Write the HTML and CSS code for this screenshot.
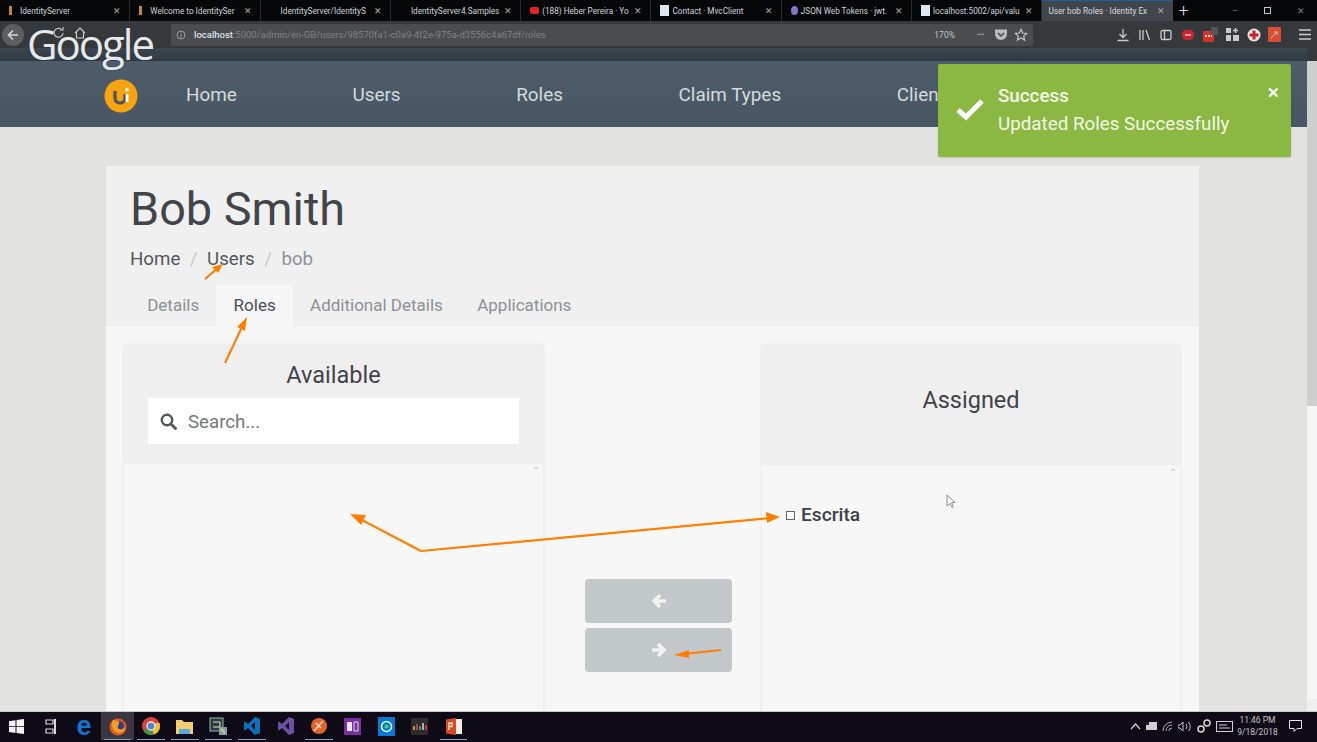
FILE: index.html
```html
<!DOCTYPE html>
<html lang="en">
<head>
<meta charset="utf-8">
<title>User bob Roles</title>
<link rel="stylesheet" href="styles.css">
</head>
<body>
<div class="screen">
  <div class="tabbar">
    <div class="tab"><i class="fav fav-is"></i><span class="tab-t">IdentityServer</span><b class="tab-x">✕</b></div>
    <div class="tab"><i class="fav fav-is"></i><span class="tab-t">Welcome to IdentitySer</span><b class="tab-x">✕</b></div>
    <div class="tab"><i class="fav"></i><span class="tab-t">IdentityServer/IdentityS</span><b class="tab-x">✕</b></div>
    <div class="tab"><i class="fav"></i><span class="tab-t">IdentityServer4.Samples</span><b class="tab-x">✕</b></div>
    <div class="tab tab-ic"><i class="fav fav-yt"></i><span class="tab-t">(188) Heber Pereira · Yo</span><b class="tab-x">✕</b></div>
    <div class="tab tab-ic"><i class="fav fav-doc"></i><span class="tab-t">Contact · MvcClient</span><b class="tab-x">✕</b></div>
    <div class="tab tab-ic"><i class="fav fav-jwt"></i><span class="tab-t">JSON Web Tokens · jwt.</span><b class="tab-x">✕</b></div>
    <div class="tab tab-ic"><i class="fav fav-doc"></i><span class="tab-t">localhost:5002/api/valu</span><b class="tab-x">✕</b></div>
    <div class="tab tab-on"><span class="tab-t">User bob Roles · Identity Ex</span><b class="tab-x">✕</b></div>
    <span class="tab-plus">+</span>
    <div class="winctl"><span>–</span><span class="win-r"></span><span>✕</span></div>
  </div>

  <div class="toolbar">
    <div class="back"><svg width="14" height="14" viewBox="0 0 14 14"><path d="M12 7H3M7 2.500 2.500 7 7 11.500" fill="none" stroke="#d5d8da" stroke-width="1.600"/></svg></div>
    <div class="urlbar">
      <svg class="info" width="10" height="10" viewBox="0 0 10 10"><circle cx="5" cy="5" r="4" fill="none" stroke="#9a9d9f"/><path d="M5 4.400v3M5 2.400v1" stroke="#9a9d9f"/></svg>
      <span class="url"><b>localhost</b>:5000/admin/en-GB/users/98570fa1-c0a9-4f2e-975a-d3556c4a67df/roles</span>
      <span class="zoomlvl">170%</span>
      <span class="dots">•••</span>
      <svg width="14" height="13" viewBox="0 0 14 13"><path d="M1 1.500h12v4.500a6 6 0 0 1-12 0z" fill="#b9bcbe"/><path d="M4 5l3 3 3-3" fill="none" stroke="#45494c" stroke-width="1.500"/></svg>
      <svg width="14" height="14" viewBox="0 0 14 14"><path d="M7 1.300 8.700 5l4 .4-3 2.700.9 4L7 10l-3.600 2.100.9-4-3-2.700 4-.4z" fill="none" stroke="#c4c7c9" stroke-width="1.200"/></svg>
    </div>
    <div class="tools">
      <svg width="14" height="14" viewBox="0 0 14 14"><path d="M7 1v8M3.500 6 7 9.500 10.500 6M1.500 12.500h11" fill="none" stroke="#c9cccd" stroke-width="1.300"/></svg>
      <svg width="14" height="14" viewBox="0 0 14 14"><path d="M2 2v10M5 2v10M8 2l3.500 10" fill="none" stroke="#c9cccd" stroke-width="1.300"/></svg>
      <svg width="14" height="14" viewBox="0 0 14 14"><rect x="2" y="2.500" width="10" height="9" rx="1.500" fill="none" stroke="#c9cccd" stroke-width="1.300"/><path d="M5.500 3v8" stroke="#c9cccd" stroke-width="1.300"/></svg>
      <svg width="14" height="14" viewBox="0 0 14 14"><path d="M3 2h8l2 3v4l-3 3H4L1 9V5z" fill="#c8232c"/><path d="M4 7h6" stroke="#f0c8c8" stroke-width="1.500"/></svg>
      <svg width="16" height="16" viewBox="0 0 16 16"><rect x="1" y="4" width="11" height="11" rx="1" fill="#d0342c"/><rect x="9" y="0" width="7" height="8" fill="#50565a"/><path d="M3 9h7" stroke="#f3c2bd" stroke-width="2" stroke-dasharray="2 1"/></svg>
      <svg width="13" height="13" viewBox="0 0 13 13"><path d="M0 0h5v5H0zM0 7h5v6H0zM7 7h6v6H7z" fill="#c9cccd"/><path d="M9.500 0v5M7 2.500h5" stroke="#c9cccd" stroke-width="1.500"/></svg>
      <svg width="14" height="14" viewBox="0 0 14 14"><circle cx="7" cy="7" r="6.500" fill="#e9e6e6"/><path d="M7 2.500v9M2.500 7h9" stroke="#c8232c" stroke-width="3"/></svg>
      <svg width="13" height="15" viewBox="0 0 13 15"><rect width="13" height="15" rx="1" fill="#dc4b35"/><path d="M3 11l6-6M6 5h3v3" fill="none" stroke="#f4c5a8"/></svg>
      <svg class="menu" width="12" height="11" viewBox="0 0 12 11"><path d="M0 1h12M0 5.500h12M0 10h12" stroke="#c9cccd" stroke-width="1.300"/></svg>
    </div>
  </div>

  <div class="viewport">
    <div class="page">
      <div class="topstrip"></div>
      <nav class="nav">
        <svg class="logo" width="34" height="34" viewBox="0 0 34 34"><circle cx="17" cy="17" r="16.500" fill="#f9a40f"/><path d="M11 12v7a5 5 0 0 0 10 0v-4" fill="none" stroke="#4a5560" stroke-width="3.200"/><circle cx="23" cy="11" r="1.800" fill="#fff"/><path d="M23 15v8" stroke="#fff" stroke-width="2.800"/></svg>
        <a class="nav-l">Home</a>
        <a class="nav-l">Users</a>
        <a class="nav-l">Roles</a>
        <a class="nav-l">Claim Types</a>
        <a class="nav-l">Clients</a>
      </nav>
      <main class="content">
        <section class="card">
          <header class="card-head">
            <h1 class="title">Bob Smith</h1>
            <div class="crumbs"><a>Home</a><i>/</i><a>Users</a><i>/</i><span>bob</span></div>
            <div class="tabs">
              <a class="pill">Details</a>
              <a class="pill pill-on">Roles</a>
              <a class="pill">Additional Details</a>
              <a class="pill">Applications</a>
            </div>
          </header>
          <div class="card-body">
            <div class="panel">
              <div class="panel-head">
                <h3 class="panel-title">Available</h3>
                <div class="search">
                  <svg width="17" height="17" viewBox="0 0 17 17"><circle cx="7" cy="7" r="5.200" fill="none" stroke="#50555a" stroke-width="2.400"/><path d="M11 11l4.500 4.500" stroke="#50555a" stroke-width="2.800" stroke-linecap="round"/></svg>
                  <span class="search-t">Search...</span>
                </div>
              </div>
              <div class="panel-list"><span class="caret">⌃</span></div>
            </div>
            <div class="mid">
              <button class="mv"><svg width="18" height="18" viewBox="0 0 18 18"><path d="M16 9H4M10 3 4 9l6 6" fill="none" stroke="#f2f4f4" stroke-width="3.400"/></svg></button>
              <button class="mv"><svg width="18" height="18" viewBox="0 0 18 18"><path d="M2 9h12M8 3l6 6-6 6" fill="none" stroke="#f2f4f4" stroke-width="3.400"/></svg></button>
            </div>
            <div class="panel">
              <div class="panel-head panel-head-r">
                <h3 class="panel-title">Assigned</h3>
              </div>
              <div class="panel-list panel-list-r">
                <span class="caret">⌃</span>
                <label class="role"><i class="box"></i>Escrita</label>
              </div>
            </div>
          </div>
        </section>
      </main>
    </div>
    <aside class="scroll"><span class="sb-up"></span><span class="sb-thumb"></span><span class="sb-down"></span></aside>
  </div>

  <footer class="taskbar">
    <div class="tb-left">
      <span class="tb"><svg width="15" height="15" viewBox="0 0 15 15"><path d="M0 2.200 6.500 1.200v6H0zM7.500 1 15 0v7.200H7.500zM0 8h6.500v6L0 13zM7.500 8H15v7l-7.500-1z" fill="#f4f4f4"/></svg></span>
      <span class="tb"><svg width="13" height="15" viewBox="0 0 13 15"><path d="M2 1h7v4H2zM2 10h7v4H2z" fill="none" stroke="#d8d8d8" stroke-width="1.200"/><path d="M11 0v15" stroke="#d8d8d8" stroke-width="2"/></svg></span>
      <span class="tb"><span class="edge">e</span></span>
      <span class="tb tb-on tb-u"><svg width="18" height="19" viewBox="0 0 18 19"><circle cx="9" cy="10" r="8.500" fill="#e8591c"/><circle cx="10" cy="9" r="5" fill="#2a3f8f"/><path d="M4 3c-3 6 0 12 6 13 4 0 6-3 6-6-2 3-6 3-7 1S12 5 9 4z" fill="#f2a01e"/></svg></span>
      <span class="tb tb-u"><svg width="18" height="18" viewBox="0 0 18 18"><circle cx="9" cy="9" r="9" fill="#d9453a"/><path d="M9 9 1.500 14A9 9 0 0 0 12 17.500z" fill="#3b9a4a"/><path d="M9 9l3 8.500A9 9 0 0 0 17.500 6H9z" fill="#f3c02e"/><circle cx="9" cy="9" r="4" fill="#4a83d8" stroke="#eee" stroke-width="1.300"/></svg></span>
      <span class="tb tb-u"><svg width="17" height="15" viewBox="0 0 17 15"><path d="M0 1h6l2 2h9v12H0z" fill="#f1cf6b"/><rect x="3" y="10" width="11" height="5" fill="#5ba6de"/></svg></span>
      <span class="tb tb-u"><svg width="18" height="18" viewBox="0 0 18 18"><rect x="1" y="1" width="13" height="13" fill="#2a3b3a" stroke="#9bb3ad"/><path d="M4 5h7v5H4" fill="none" stroke="#dfe6e3"/><rect x="10" y="10" width="8" height="8" fill="#7f9fb5"/><path d="M12 12l4 4" stroke="#e3c94e" stroke-width="2"/></svg></span>
      <span class="tb tb-u"><svg width="16" height="18" viewBox="0 0 16 18"><path d="M11 0 16 2v14l-5 2L4 11l-3 2.500-1-1V5.500l1-1L4 7z" fill="#0f6fb8"/><path d="M11 5 7 9l4 4z" fill="#10131a"/></svg></span>
      <span class="tb"><svg width="16" height="18" viewBox="0 0 16 18"><path d="M11 0 16 2v14l-5 2L4 11l-3 2.500-1-1V5.500l1-1L4 7z" fill="#6e4fa3"/><path d="M11 5 7 9l4 4z" fill="#10131a"/></svg></span>
      <span class="tb tb-u"><svg width="16" height="18" viewBox="0 0 16 18"><circle cx="8" cy="9" r="8" fill="#e2642c"/><path d="M3 14 12 4M5 6l5 5" stroke="#f3d2bd" stroke-width="1.600"/></svg></span>
      <span class="tb"><svg width="17" height="17" viewBox="0 0 17 17"><rect width="17" height="17" fill="#7b2f9e"/><path d="M3 4h5v9H3z" fill="#f1e8f5"/><path d="M10 4h4v9h-4z" fill="none" stroke="#e8d4f0"/></svg></span>
      <span class="tb"><svg width="17" height="19" viewBox="0 0 17 19"><rect width="17" height="19" fill="#0a78d2"/><circle cx="8.500" cy="9.500" r="5" fill="none" stroke="#e8fff0" stroke-width="1.500"/><circle cx="8.500" cy="9.500" r="2" fill="#3dd47a"/></svg></span>
      <span class="tb"><svg width="17" height="17" viewBox="0 0 17 17"><rect width="17" height="17" rx="1" fill="#2b2b30"/><path d="M3 12V8" stroke="#e1c13e" stroke-width="1.500"/><path d="M6 12V6" stroke="#e2494d" stroke-width="1.500"/><path d="M9 12V8" stroke="#55b36a" stroke-width="1.500"/><path d="M12 12V5" stroke="#d9d9d9" stroke-width="1.500"/><path d="M15 12V7" stroke="#e2494d" stroke-width="1.500"/></svg></span>
      <span class="tb tb-u"><svg width="16" height="17" viewBox="0 0 16 17"><rect x="6" y="1" width="10" height="15" fill="#f2efea"/><path d="M0 1.500 10 0v17L0 15.500z" fill="#d64b26"/><path d="M3 12V5h3v3.500H3" fill="none" stroke="#f9dfd3" stroke-width="1.300"/></svg></span>
    </div>
    <div class="tray">
      <svg width="11" height="7" viewBox="0 0 11 7"><path d="M1 6l4.500-5L10 6" fill="none" stroke="#d5d5d5" stroke-width="1.200"/></svg>
      <svg width="11" height="8" viewBox="0 0 11 8"><rect width="11" height="8" fill="#d0d0d0"/><rect x="0" y="0" width="3" height="3" fill="#222"/></svg>
      <svg width="11" height="11" viewBox="0 0 11 11"><path d="M1 10A9 9 0 0 1 10 1M4 10a6 6 0 0 1 6-6M7 10a3 3 0 0 1 3-3" fill="none" stroke="#b5b5b5"/></svg>
      <svg width="14" height="11" viewBox="0 0 14 11"><path d="M0 4h2l3-3v9L2 7H0z" fill="none" stroke="#c8c8c8"/><path d="M8 3q2 2.500 0 5M10.500 1q3.500 4.500 0 9" fill="none" stroke="#c8c8c8"/></svg>
      <svg width="14" height="14" viewBox="0 0 14 14"><circle cx="4" cy="10" r="3" fill="none" stroke="#d8d8d8" stroke-width="1.500"/><circle cx="10" cy="4" r="3" fill="none" stroke="#d8d8d8" stroke-width="1.500"/></svg>
      <svg width="17" height="11" viewBox="0 0 17 11"><rect x=".5" y=".5" width="16" height="10" fill="none" stroke="#d0d0d0"/><path d="M3 4h8M3 7h11" stroke="#d0d0d0"/></svg>
      <div class="clock"><span>11:46 PM</span><span>9/18/2018</span></div>
      <svg class="notif" width="13" height="12" viewBox="0 0 13 12"><path d="M.5.500h12v8H8l-3 3v-3H.5z" fill="none" stroke="#e5e5e5"/></svg>
    </div>
  </footer>

  <div class="gbrand"><span>Google</span>
    <svg class="gicons" width="36" height="14" viewBox="0 0 36 14"><path d="M10 3a4.500 4.500 0 1 0 2 4M12 1v3H9" fill="none" stroke="#cfd2d4" stroke-width="1.100"/><path d="M24 7l5-5 5 5M25.500 6.500V12h7V6.500" fill="none" stroke="#cfd2d4" stroke-width="1.100"/></svg>
  </div>

  <aside class="toast">
    <svg class="toast-ic" width="30" height="24" viewBox="0 0 30 24"><path d="M3 13l8 7L27 4" fill="none" stroke="#fff" stroke-width="5"/></svg>
    <div class="toast-txt"><strong>Success</strong><span>Updated Roles Successfully</span></div>
    <b class="toast-x">✕</b>
  </aside>

  <svg class="arrows" width="1317" height="742" viewBox="0 0 1317 742">
    <g fill="none" stroke="#ff8000" stroke-width="2.200">
      <path d="M205 279 218 268"/>
      <path d="M225 363 242 327"/>
      <path d="M421 551 360 519"/>
      <path d="M421 551 770 518"/>
      <path d="M721 650 684 654"/>
    </g>
    <g fill="#ff8000">
      <path d="M223 264 212 267 218 273z"/>
      <path d="M247 317 237 327 245 331z"/>
      <path d="M350 514 366 515 361 525z"/>
      <path d="M780 517 766 512 767 523z"/>
      <path d="M674 655 689 650 689 658z"/>
    </g>
    <path d="M947 495v11l3-2.500 2 4 1.500-.8-2-4 3.500-.3z" fill="#f4f5f5" stroke="#777" stroke-width=".8"/>
  </svg>
</div>
</body>
</html>
```
FILE: styles.css
```css
* { box-sizing: border-box; }
html, body { margin: 0; padding: 0; height: 100%; overflow: hidden; }
body { font-family: Roboto, "Liberation Sans", sans-serif; background: #000; }
a { text-decoration: none; color: inherit; }
h1, h3 { margin: 0; font-weight: 400; }
.screen { position: relative; width: 1317px; height: 742px; display: flex; flex-direction: column; overflow: hidden; }

.tabbar { height: 21px; flex: none; display: flex; align-items: stretch; background: #060708; }
.tab { width: 130.300px; flex: none; display: flex; align-items: center; gap: 5px; padding: 0 8px 0 9px; border-right: 1px solid #2a2c2e; color: #cfd4dc; font-size: 8.200px; overflow: hidden; }
.tab-t { flex: 1; white-space: nowrap; overflow: hidden; min-width: 0; padding-left: 3px; }
.tab-ic { gap: 0; }
.tab-x { font-size: 9px; color: #a9acae; font-weight: 400; flex: none; }
.tab-on { background: #41464b; color: #d9dcde; border-top: 1px solid #1a5fa8; border-right: 0; padding-left: 3px; }
.fav { width: 3px; height: 9px; flex: none; }
.fav-is { background: #c9862a; }
.fav-yt { width: 9px; height: 7px; background: #e5231f; border-radius: 2px; }
.fav-doc { width: 9px; height: 11px; background: #dfe6ee; }
.fav-jwt { width: 7px; height: 9px; background: #8a72c8; border-radius: 50%; }
.tab-plus { color: #d9d9d9; font-size: 18px; line-height: 21px; width: 24px; text-align: center; margin-left: -1px; font-weight: 300; }
.winctl { margin-left: auto; display: flex; align-items: center; gap: 26px; padding-right: 12px; color: #7d8082; font-size: 9px; }
.win-r { width: 7px; height: 7px; border: 1px solid #c6c8ca; }

.toolbar { height: 27px; flex: none; display: flex; align-items: center; background: #36393b; padding-left: 2px; }
.back { width: 22px; height: 22px; border-radius: 50%; background: #5b5f62; display: flex; align-items: center; justify-content: center; flex: none; }
.urlbar { margin-left: 147px; width: 862px; height: 22px; background: #4a4d4f; border-radius: 2px; display: flex; align-items: center; padding: 0 5px; color: #7e8285; font-size: 8.500px; flex: none; }
.info { margin-right: 8px; flex: none; }
.url { flex: 1; white-space: nowrap; font-size: 9.500px; }
.url b { color: #dfe2e4; font-weight: 500; }
.zoomlvl { color: #c0c4cf; margin-right: 22px; }
.dots { color: #b9bcbe; font-size: 7px; margin-right: 10px; }
.urlbar svg + svg { margin-left: 6px; }
.tools { margin-left: 83px; display: flex; align-items: center; gap: 7.600px; }
.menu { margin-left: 10px; }

.viewport { flex: 1; min-height: 0; display: flex; overflow: hidden; }
.page { flex: 1; min-width: 0; display: flex; flex-direction: column; background: #e2e3e1; }
.topstrip { height: 13px; flex: none; background: linear-gradient(#3b464f, #2e3943); }
.nav { height: 66px; flex: none; display: flex; align-items: center; gap: 115.600px; padding: 0 0 0 104px; background: linear-gradient(#4e5c69, #495764); color: #d5dadd; font-size: 18.900px; }
.logo { margin-right: -67.600px; margin-top: 4px; }

.content { flex: 1; min-height: 0; padding: 39px 108px 0 106px; overflow: hidden; }
.card { background: #f7f7f8; height: 700px; }
.card-head { height: 160px; background: #f0f0f0; padding: 15px 0 0 24px; border-bottom: 1px solid #ebebeb; display: flex; flex-direction: column; }
.title { font-size: 46.800px; line-height: 56px; color: #41454a; }
.crumbs { margin-top: 11px; font-size: 18.700px; line-height: 22px; color: #54585c; display: flex; gap: 9.500px; }
.crumbs i { font-style: normal; color: #c9c9c9; }
.crumbs span { color: #8f9396; }
.tabs { margin-top: 15px; display: flex; font-size: 17px; color: #8d9094; }
.pill { padding: 10px 17.200px 0; height: 41px; }
.pill-on { background: #f7f7f8; color: #4b4f53; }
.card-body { display: grid; grid-template-columns: 419px 1fr 418px; padding: 19px 19px 0 18px; }
.panel { height: 600px; display: flex; flex-direction: column; box-shadow: 0 0 4px rgba(0,0,0,.09); }
.panel-head { height: 118px; background: #efefef; padding: 16px 24px 0; flex: none; text-align: center; }
.panel-head-r { height: 120px; padding-top: 41px; }
.panel-title { font-size: 23.500px; line-height: 28px; color: #3f4347; }
.search { margin-top: 9px; height: 46px; background: #fff; display: flex; align-items: center; gap: 11px; padding-left: 12px; font-size: 18.700px; color: #75787b; text-align: left; }
.search-t { padding-top: 2px; }
.panel-list { flex: 1; position: relative; background: #f7f7f8; border-top: 1px solid #f2f2f2; }
.caret { position: absolute; top: 0; right: 3px; font-size: 10px; line-height: 14px; color: #c4c4c4; }
.role { display: flex; align-items: center; gap: 6px; padding: 38px 0 0 24px; font-size: 19.200px; line-height: 22px; font-weight: 500; color: #3c4045; }
.box { width: 9px; height: 9px; background: #fff; border: 1px solid #666; flex: none; }
.mid { display: flex; flex-direction: column; gap: 5px; padding: 234px 30px 0 42px; }
.mv { width: 147px; height: 44px; border: 0; padding: 0; background: #c2c7ca; border-radius: 4px; display: flex; align-items: center; justify-content: center; }

.scroll { width: 10px; flex: none; display: flex; flex-direction: column; background: #f6f6f6; }
.sb-up { height: 13px; flex: none; background: #36393b; }
.sb-thumb { height: 345px; flex: none; background: #cfcfcf; }
.sb-down { margin-top: auto; height: 12px; background: #efefef; }

.taskbar { height: 31px; flex: none; display: flex; justify-content: space-between; align-items: stretch; background: #0e0a16; border-top: 1px solid #c9c9cc; padding-bottom: 2px; }
.tb-left { display: flex; }
.tb { width: 33.600px; height: 100%; display: flex; align-items: center; justify-content: center; position: relative; }
.tb-u::after { content: ""; position: absolute; left: 3px; right: 3px; bottom: 0; height: 1px; background: #7ba6cc; }
.tb-on { background: #3a3740; }
.edge { color: #0f74d6; font-size: 27px; font-weight: 700; line-height: 24px; font-family: "Liberation Sans", sans-serif; }
.tray { display: flex; align-items: center; gap: 5px; padding-right: 15px; color: #c4c4c4; }
.clock { display: flex; flex-direction: column; align-items: center; font-size: 8.500px; line-height: 12px; width: 40px; }
.notif { margin-left: 6.500px; }

.gbrand { position: absolute; left: 27px; top: 18px; color: #e6e9ea; font-family: "Open Sans", sans-serif; font-size: 42px; line-height: 52px; letter-spacing: -2px; text-shadow: 0 0 1px #22282c; }
.gicons { position: absolute; left: 24px; top: 8px; }
.toast { position: absolute; left: 938px; top: 64px; width: 353px; height: 93px; background: #8ab843; border-radius: 2px; display: flex; color: #f3f8e6; box-shadow: 0 1px 2px rgba(0,0,0,.15); }
.toast-ic { margin: 33px 0 0 17px; flex: none; }
.toast-txt { margin-left: 13px; padding-top: 21px; display: flex; flex-direction: column; gap: 6px; font-size: 18.800px; line-height: 22px; }
.toast-txt strong { font-weight: 500; }
.toast-x { position: absolute; right: 11px; top: 19px; color: #fff; font-size: 15px; line-height: 20px; }
.arrows { position: absolute; left: 0; top: 0; pointer-events: none; }
```
